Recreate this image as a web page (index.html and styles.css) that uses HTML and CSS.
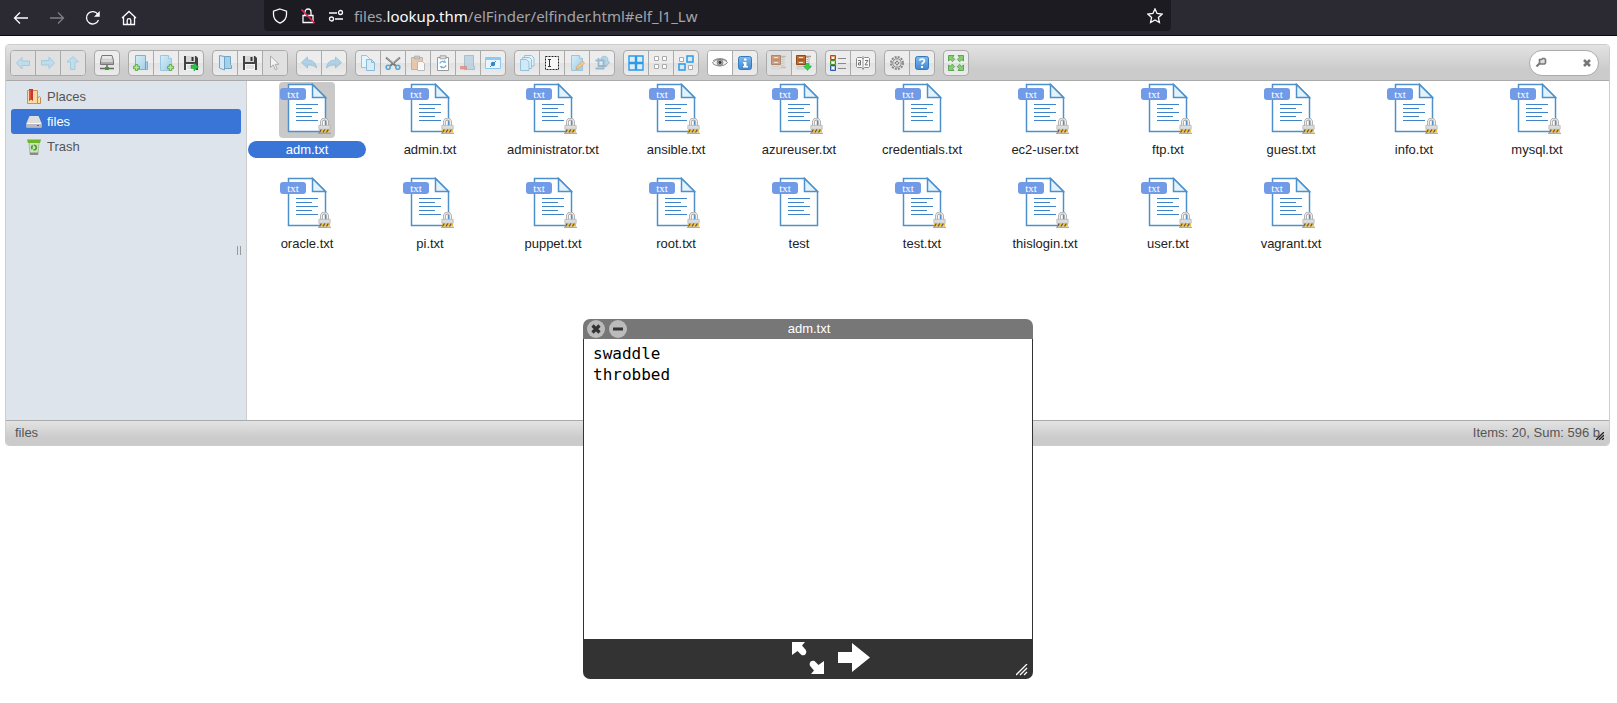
FILE: index.html
```html
<!DOCTYPE html>
<html lang="en">
<head>
<meta charset="utf-8">
<title>elFinder</title>
<link rel="stylesheet" href="styles.css">
</head>
<body>
<svg class="defs" aria-hidden="true">
  <defs>
    <linearGradient id="blue" x1="0" y1="0" x2="1" y2="1"><stop offset="0" stop-color="#d6eef9"/><stop offset="1" stop-color="#9fcbe6"/></linearGradient>
    <linearGradient id="metal" x1="0" y1="0" x2="0" y2="1"><stop offset="0" stop-color="#f4f4f4"/><stop offset="1" stop-color="#999"/></linearGradient>
    <linearGradient id="sky" x1="0" y1="0" x2="0" y2="1"><stop offset="0" stop-color="#7fbdf0"/><stop offset="1" stop-color="#3f87d3"/></linearGradient>
    <symbol id="plus" viewBox="0 0 6 6"><path d="M2 .4h2V2h1.600v2H4v1.600H2V4H.4V2H2z" fill="#b4e39a" stroke="#5aa846" stroke-width=".8"/></symbol>
    <symbol id="arrow" viewBox="0 0 16 16"><path d="M1.500 8L7 2.500V6h7.500v4.500H7V14z" fill="#a9daf2" stroke="#7cbce0"/></symbol>
    <symbol id="floppy" viewBox="0 0 16 16"><path d="M1 1h12l2 2v12H1z" fill="#444"/><path d="M3 1h9v6H3z" fill="#d8d8d8"/><path d="M8.500 2h2v4h-2z" fill="#333"/><path d="M3 9h10v6H3z" fill="#f6f6f6"/><path d="M4 11h8M4 13h8" stroke="#ccc"/></symbol>
    <symbol id="undo" viewBox="0 0 16 16"><path d="M.5 7.500L6.500 2v3c5 0 8.500 2.500 9 8-2-2.500-5-3-9-3v3z" fill="#9cc8e4" stroke="#7eb0d2" stroke-width=".8"/></symbol>
    <symbol id="page" viewBox="0 0 16 16"><path d="M2.500.5h8l3 3v12h-11z" fill="url(#blue)" stroke="#9cc6df"/><path d="M10.500.5v3h3" fill="#eef9ff" stroke="#9cc6df"/></symbol>
    <symbol id="cabinet" viewBox="0 0 16 16">
      <path d="M1 9h8v5H1z" fill="#ddd" stroke="#bbb" stroke-width=".6"/><path d="M2 11.500h6" stroke="#bbb"/>
      <path d="M.5.5h9v9h-9z" fill="#c3713a" stroke="#8e4a1c"/><path d="M1.500 5h7" stroke="#8e4a1c"/><path d="M3 2.500h4M3 7.500h4" stroke="#fbe6d2"/>
      <path d="M10 1.500h5M10 12.500h5" stroke="#b5a08c" stroke-width="1.500"/><path d="M11.500 2v11" stroke="#aaa" stroke-width="2" stroke-dasharray="1 1"/><path d="M13 3v9" stroke="#ccc" stroke-width="1.500"/>
    </symbol>
    <symbol id="corner" viewBox="0 0 16 16"><path d="M.5.5H6L4.700 2.200 6.800 4.300 4.500 6.600 2.300 4.500.5 6z" fill="#86cd76" stroke="#459a3c" stroke-width=".8"/></symbol>
    <symbol id="doc" viewBox="0 0 56 56">
      <path d="M9.500 2.500h24l13 13v34h-37z" fill="#fff" stroke="#4d90cc" stroke-width="1.500"/>
      <path d="M33.500 2.500v13h13z" fill="#e3f3fd" stroke="#4d90cc" stroke-width="1.500"/>
      <path d="M17 22.500h22M17 26.500h16M17 30.500h22M17 34.500h16M17 38.500h22" stroke="#3f83c8"/>
    </symbol>
    <symbol id="lock" viewBox="0 0 13 16">
      <path d="M3.500 9V4a3 3 0 0 1 6 0V9" fill="none" stroke="#a4a4a4" stroke-width="2.800"/>
      <path d="M3.500 9V4a3 3 0 0 1 6 0V9" fill="none" stroke="#eee" stroke-width="1.200"/>
      <path d="M.8 7.300h11.400v4H.8z" fill="#dcdcdc" stroke="#aaa" stroke-width=".6"/>
      <path d="M1 11.300h11v3.200H1z" fill="#fbc02a"/>
      <path d="M1.500 14.500l1.800-3M5 14.500l1.800-3M8.500 14.500l1.800-3" stroke="#555" stroke-width="1.200"/>
      <path d="M0 15.300h13" stroke="#999"/>
    </symbol>
  </defs>
</svg>

<header class="browser">
  <nav class="browser-nav" aria-label="Browser">
    <button class="chrome-btn" aria-label="Back"><svg viewBox="0 0 16 16"><path d="M15 8H1.500M7 2.500L1.500 8 7 13.500"/></svg></button>
    <button class="chrome-btn dim" aria-label="Forward"><svg viewBox="0 0 16 16"><path d="M1 8h13.500M9 2.500L14.500 8 9 13.500"/></svg></button>
    <button class="chrome-btn" aria-label="Reload"><svg viewBox="0 0 16 16"><path d="M13.500 10A6.200 6.200 0 1 1 13 4.500"/><path d="M14.500 1.500v5h-5z" fill="#fbfbfe" stroke-width=".5"/></svg></button>
    <button class="chrome-btn" aria-label="Home"><svg viewBox="0 0 16 16"><path d="M1 8l7-6.500L15 8M2.500 7v7.500h11V7M6.200 14.500V10.500a1.800 1.800 0 0 1 3.600 0v4"/></svg></button>
  </nav>
  <div class="urlbar">
    <svg class="uicon" viewBox="0 0 16 16"><path d="M8 1l6.500 2.200v3.300c0 4-2.500 7-6.500 8.700-4-1.700-6.500-4.700-6.500-8.700V3.200z"/></svg>
    <svg class="uicon" viewBox="0 0 16 16"><path d="M3 7.500h10v7H3zM5 7V4a3 3 0 0 1 6 0v3"/><path d="M1.500 1.500l13 13.500" stroke="#e22850" stroke-width="1.800"/></svg>
    <svg class="uicon" viewBox="0 0 16 16"><path d="M1 5h8M7 11h8"/><circle cx="12.500" cy="4.500" r="2"/><circle cx="3.500" cy="11" r="2"/></svg>
    <div class="url">files.<b>lookup.thm</b>/elFinder/elfinder.html#elf_l1_Lw</div>
    <svg class="uicon star" viewBox="0 0 16 16"><path d="M8 .9l2.100 4.600 5 .6-3.700 3.400 1 5L8 12l-4.400 2.500 1-5L.9 6.100l5-.6z"/></svg>
  </div>
</header>

<main class="finder">
  <div class="toolbar">
    <div class="group">
      <button class="off" aria-label="Back"><svg viewBox="0 0 16 16"><use href="#arrow"/></svg></button>
      <button class="off" aria-label="Forward"><svg viewBox="0 0 16 16"><use href="#arrow" transform="rotate(180 8 8)"/></svg></button>
      <button class="off" aria-label="Up"><svg viewBox="0 0 16 16"><use href="#arrow" transform="rotate(90 8 8)"/></svg></button>
    </div>
    <div class="group">
      <button aria-label="Mount network volume"><svg viewBox="0 0 16 16"><path d="M3 .5h10l1.500 5v4h-13v-4z" fill="url(#metal)" stroke="#777"/><path d="M3.500 3h9M2.500 6h11" stroke="#eee"/><path d="M8 10v3M1 13.500h14" stroke="#666" stroke-width="1.500"/><path d="M6 12h4v3H6z" fill="#33a02c"/></svg></button>
    </div>
    <div class="group">
      <button aria-label="New folder"><svg viewBox="0 0 16 16"><path d="M2.500.5h10v7l2-1v8h-12z" fill="url(#blue)" stroke="#82b0cc"/><path d="M12.500 7v7" stroke="#6a9fc0"/><use href="#plus" x="0" y="9" width="7" height="7"/></svg></button>
      <button aria-label="New file"><svg viewBox="0 0 16 16"><use href="#page"/><use href="#plus" x="9" y="9" width="7" height="7"/></svg></button>
      <button aria-label="Upload files"><svg viewBox="0 0 16 16"><use href="#floppy"/><path d="M8 10h3V8l4.500 3.800L11 16v-2.500H8z" fill="#2fc048" stroke="#179130" stroke-width=".5"/></svg></button>
    </div>
    <div class="group">
      <button aria-label="Open"><svg viewBox="0 0 16 16"><path d="M6 1.500h7.500v8l1 1v3H5z" fill="#a9cfe6" stroke="#6fa6c8"/><path d="M2.500.5l5 1v13.500l-5-2z" fill="#d3eafa" stroke="#6fa6c8"/></svg></button>
      <button aria-label="Download"><svg viewBox="0 0 16 16"><use href="#floppy"/></svg></button>
      <button class="off" aria-label="Select file"><svg viewBox="0 0 16 16"><path d="M3.500 1v11.500l2.800-2.700 2 5 1.900-.8-2-4.700h3.800z" fill="#fff" stroke="#888"/></svg></button>
    </div>
    <div class="group">
      <button class="half" aria-label="Undo"><svg viewBox="0 0 16 16"><use href="#undo"/></svg></button>
      <button class="half" aria-label="Redo"><svg viewBox="0 0 16 16"><use href="#undo" transform="matrix(-1 0 0 1 16 0)"/></svg></button>
    </div>
    <div class="group">
      <button aria-label="Copy"><svg viewBox="0 0 16 16"><path d="M1.500.5h5l3 3v9h-8z" fill="#e5f5fc" stroke="#9bc4dc"/><path d="M6.500 4.500h5l3 3v8h-8z" fill="#d5edf9" stroke="#8dbbd6"/><path d="M11.500 4.500v3h3" fill="none" stroke="#8dbbd6"/></svg></button>
      <button aria-label="Cut"><svg viewBox="0 0 16 16"><path d="M1 2.500L11 11M15 2.500L5 11" stroke="#777" stroke-width="2"/><path d="M1.500 2.500l7 6M14.500 2.500L8 8" stroke="#ccc" stroke-width=".7"/><circle cx="3.200" cy="12.200" r="2" fill="none" stroke="#5aa7d4" stroke-width="1.600"/><circle cx="12.800" cy="12.200" r="2" fill="none" stroke="#5aa7d4" stroke-width="1.600"/></svg></button>
      <button class="half" aria-label="Paste"><svg viewBox="0 0 16 16"><path d="M1.500 2.500h11v12h-11z" fill="#e6bd98" stroke="#c99a72"/><path d="M4.500 1h5v3h-5z" fill="#bbb" stroke="#888" stroke-width=".6"/><path d="M7.500 6.500h5l2 2v7h-7z" fill="#fff" stroke="#aaa"/></svg></button>
      <button aria-label="Empty the folder"><svg viewBox="0 0 16 16"><path d="M2.500 2.500h11v13h-11z" fill="#fff" stroke="#999"/><path d="M5 .8h6v3H5z" fill="#ddd" stroke="#888" stroke-width=".7"/><path d="M5 8.500C5 6.500 8 6 9 7M11 10c0 2.500-3 3-4 2" fill="none" stroke="#6fb3e4" stroke-width="1.300"/><path d="M9 4.800l2.500 3H8.500zM7 14l-2.500-3h3z" fill="#6fb3e4"/></svg></button>
      <button class="half" aria-label="Delete"><svg viewBox="0 0 16 16"><path d="M4.500.5h9v11h1v3h-10z" fill="#b3cddf" stroke="#8fb0c8"/><path d="M.5 11.500h6v2.500h-6z" fill="#ec8478" stroke="#c8574c" stroke-width=".6"/></svg></button>
      <button aria-label="Hide"><svg viewBox="0 0 16 16"><path d="M.5 2.500h15v11H.5z" fill="#e9f6ff" stroke="#8ac8f2"/><path d="M1 3h14v2H1z" fill="#8accf5"/><path d="M5 12l6-6" stroke="#4a86b8"/><circle cx="8" cy="9" r="2.200" fill="#3c86c2"/></svg></button>
    </div>
    <div class="group">
      <button aria-label="Duplicate"><svg viewBox="0 0 16 16"><path d="M5.500.5h7l2.500 2.500v8H5.500z" fill="#e1f3fb" stroke="#96c1d9"/><path d="M3.500 2.500h7l2 2v9h-9z" fill="#d9effa" stroke="#96c1d9"/><path d="M1.500 4.500h6l2.500 2.500v8.500H1.500z" fill="#cfe9f7" stroke="#96c1d9"/></svg></button>
      <button aria-label="Rename"><svg viewBox="0 0 16 16"><path d="M1.500 1.500h13v13h-13z" fill="#f6f6f6" stroke="#222" stroke-dasharray="2 1"/><path d="M4 4.500h3M5.500 4.500v7M4 11.500h3" stroke="#333"/></svg></button>
      <button aria-label="Edit file"><svg viewBox="0 0 16 16"><use href="#page"/><path d="M7 14.500l1-3 5.500-5.500 2 2L10 13.500z" fill="#f6ca85" stroke="#c39a5a" stroke-width=".6"/></svg></button>
      <button class="half" aria-label="Resize and rotate"><svg viewBox="0 0 16 16"><path d="M1.500 5.500h8v8h-8M4.500 3v8h8" fill="none" stroke="#7da9c6" stroke-width="1.800"/><path d="M7 3c2-3 7-2 7 2v2h2l-3.500 4L9 7h2c0-3-2-3-4-2z" fill="#a5cde6" stroke="#6d9dbd" stroke-width=".6"/></svg></button>
    </div>
    <div class="group">
      <button aria-label="Select all"><svg viewBox="0 0 16 16"><path d="M1 1h6.500v6.500H1zM8.500 1H15v6.500H8.500zM1 8.500h6.500V15H1zM8.500 8.500H15V15H8.500z" fill="#dcecf8" stroke="#2b9be6" stroke-width="1.400"/></svg></button>
      <button aria-label="Select none"><svg viewBox="0 0 16 16"><path d="M1.500 1.500h4v4h-4zM9.500 1.500h4v4h-4zM1.500 9.500h4v4h-4zM9.500 9.500h4v4h-4z" fill="#fff" stroke="#aaa"/></svg></button>
      <button aria-label="Invert selection"><svg viewBox="0 0 16 16"><path d="M1.500 2.500h4v4h-4zM10.500 10.500h4v4h-4z" fill="#fff" stroke="#aaa"/><path d="M9 1h6v6H9zM1 9h6v6H1z" fill="#d6eaf8" stroke="#2b9be6" stroke-width="1.500"/></svg></button>
    </div>
    <div class="group">
      <button class="on" aria-label="Preview"><svg viewBox="0 0 16 16"><path d="M.5 8C4 3 12 3 15.500 7.500 12 12 4 12 .5 8z" fill="#f4f4f4" stroke="#888"/><path d="M1 6C4 3 11 2.500 15 6" stroke="#777" stroke-width=".8"/><circle cx="8" cy="7.500" r="3" fill="#aaa" stroke="#666" stroke-width=".6"/><circle cx="8" cy="7.500" r="1.400" fill="#333"/></svg></button>
      <button aria-label="Get info"><svg viewBox="0 0 16 16"><rect x="1.500" y="1.500" width="13" height="13" rx="2" fill="url(#sky)" stroke="#3779bd"/><path d="M7 3.500h2.500v2H7zM6 7h3.500v4H11v1.500H6V11h1V8.500H6z" fill="#fff"/></svg></button>
    </div>
    <div class="group">
      <button class="off" aria-label="Extract files from archive"><svg viewBox="0 0 16 16"><use href="#cabinet"/></svg></button>
      <button aria-label="Create archive"><svg viewBox="0 0 16 16"><use href="#cabinet"/><path d="M10 8.500h3V11h2.500L11.500 15.500 7.500 11H10z" fill="#36d14b" stroke="#279a38" stroke-width=".5"/></svg></button>
    </div>
    <div class="group">
      <button aria-label="View"><svg viewBox="0 0 16 16"><path d="M.5.5h5v4h-5z" fill="#ef9a6d" stroke="#a84f25"/><path d="M.5 5.500h5v4h-5z" fill="#bde69a" stroke="#4d8b2f"/><path d="M.5 10.500h5v5h-5z" fill="#9dc1f3" stroke="#2a5a9f"/><path d="M2 2h2v2H2zM2 7h2v1.500H2zM2 12h2v2H2z" fill="#fff"/><path d="M8 3.500h8M8 8.500h8M8 13.500h8" stroke="#888"/></svg></button>
      <button aria-label="Sort"><svg viewBox="0 0 16 16"><path d="M2.500 2.500h4L8 4l1.500-1.500h4l1 1v8l-1 1h-4L8 14l-1.500-1.500h-4l-1-1v-8z" fill="#fafafa" stroke="#888"/><path d="M8 1v14" stroke="#999"/><path d="M3 5.500h2.500v4.500h-2V7.800h2M10 5.500h3L10 9.900h3" fill="none" stroke="#666" stroke-width=".9"/></svg></button>
    </div>
    <div class="group">
      <button aria-label="Preferences"><svg viewBox="0 0 16 16"><circle cx="8" cy="8" r="6" stroke="#888" stroke-width="2" stroke-dasharray="2 1.140"/><circle cx="8" cy="8" r="4.300" fill="#e2e2e2" stroke="#888"/><path d="M8 4v8M4 8h8" stroke="#aaa" stroke-width=".8"/><circle cx="8" cy="8" r="1.500" fill="#eee" stroke="#777"/></svg></button>
      <button aria-label="Help"><svg viewBox="0 0 16 16"><rect x="1.500" y="1.500" width="13" height="13" rx="2" fill="url(#sky)" stroke="#3779bd"/><path d="M5.500 5.500c.5-2 5-2 5 .5 0 1.500-2.500 1.500-2.500 3.500" fill="none" stroke="#fff" stroke-width="1.700"/><path d="M7 11h2v2H7z" fill="#fff"/></svg></button>
    </div>
    <div class="group">
      <button aria-label="Full screen"><svg viewBox="0 0 16 16"><use href="#corner"/><use href="#corner" transform="rotate(90 8 8)"/><use href="#corner" transform="rotate(180 8 8)"/><use href="#corner" transform="rotate(270 8 8)"/></svg></button>
    </div>
    <form class="search">
      <svg viewBox="0 0 12 12"><path d="M4.500 2.500h2l1-1h2l1 1v3.500l-1 1h-4l-1-1z" fill="#ddd" stroke="#777" stroke-width="1.600"/><path d="M4.500 6.500L1.500 9.500" stroke="#777" stroke-width="2.200"/></svg>
      <input type="text" aria-label="Search">
      <button type="button" aria-label="Clear"><svg viewBox="0 0 12 12"><path d="M3 3l6 6M9 3l-6 6" stroke="#777" stroke-width="2.600"/></svg></button>
    </form>
  </div>

  <div class="workzone">
    <nav class="tree" aria-label="Folders">
      <a href="#places"><svg viewBox="0 0 16 16"><path d="M1.500 1.500h10v13h-10z" fill="#f8dca4" stroke="#c99658"/><path d="M11.500 9l2-1.500 1 1v6h-3z" fill="#f9e1b0" stroke="#c18a48"/><path d="M3 0h4v12l-2-1.500L3 12z" fill="#cf3030"/><path d="M4 1v9" stroke="#ec7070"/></svg>Places</a>
      <a href="#files" class="current"><svg viewBox="0 0 16 16"><path d="M3.500 2h9l3 7v4.500H.5V9z" fill="#dedede"/><path d="M.5 9h15v4.500H.5z" fill="#b9b9c0"/><path d="M1 9.500h14" stroke="#f8f8f8"/><path d="M11 11.500h2" stroke="#666"/></svg>files</a>
      <a href="#trash"><svg viewBox="0 0 16 16"><path d="M3 3h10l-1 12.500H4z" fill="#c9e3bf" stroke="#9ab290" stroke-width=".8"/><path d="M1 .5h14l-1 3.500H2z" fill="#6db52b"/><circle cx="8" cy="8.500" r="2.300" stroke="#4d9c22" stroke-width="1.600" stroke-dasharray="3.800 1"/><path d="M4 13.500h8V16H4z" fill="#8b8b8b"/></svg>Trash</a>
      <span class="handle"></span>
    </nav>
    <ul class="files">
      <li class="tile selected"><div class="pic"><svg><use href="#doc"/></svg><span class="badge">txt</span><svg class="lock"><use href="#lock"/></svg></div><span class="name">adm.txt</span></li>
      <li class="tile"><div class="pic"><svg><use href="#doc"/></svg><span class="badge">txt</span><svg class="lock"><use href="#lock"/></svg></div><span class="name">admin.txt</span></li>
      <li class="tile"><div class="pic"><svg><use href="#doc"/></svg><span class="badge">txt</span><svg class="lock"><use href="#lock"/></svg></div><span class="name">administrator.txt</span></li>
      <li class="tile"><div class="pic"><svg><use href="#doc"/></svg><span class="badge">txt</span><svg class="lock"><use href="#lock"/></svg></div><span class="name">ansible.txt</span></li>
      <li class="tile"><div class="pic"><svg><use href="#doc"/></svg><span class="badge">txt</span><svg class="lock"><use href="#lock"/></svg></div><span class="name">azureuser.txt</span></li>
      <li class="tile"><div class="pic"><svg><use href="#doc"/></svg><span class="badge">txt</span></div><span class="name">credentials.txt</span></li>
      <li class="tile"><div class="pic"><svg><use href="#doc"/></svg><span class="badge">txt</span><svg class="lock"><use href="#lock"/></svg></div><span class="name">ec2-user.txt</span></li>
      <li class="tile"><div class="pic"><svg><use href="#doc"/></svg><span class="badge">txt</span><svg class="lock"><use href="#lock"/></svg></div><span class="name">ftp.txt</span></li>
      <li class="tile"><div class="pic"><svg><use href="#doc"/></svg><span class="badge">txt</span><svg class="lock"><use href="#lock"/></svg></div><span class="name">guest.txt</span></li>
      <li class="tile"><div class="pic"><svg><use href="#doc"/></svg><span class="badge">txt</span><svg class="lock"><use href="#lock"/></svg></div><span class="name">info.txt</span></li>
      <li class="tile"><div class="pic"><svg><use href="#doc"/></svg><span class="badge">txt</span><svg class="lock"><use href="#lock"/></svg></div><span class="name">mysql.txt</span></li>
      <li class="tile"><div class="pic"><svg><use href="#doc"/></svg><span class="badge">txt</span><svg class="lock"><use href="#lock"/></svg></div><span class="name">oracle.txt</span></li>
      <li class="tile"><div class="pic"><svg><use href="#doc"/></svg><span class="badge">txt</span><svg class="lock"><use href="#lock"/></svg></div><span class="name">pi.txt</span></li>
      <li class="tile"><div class="pic"><svg><use href="#doc"/></svg><span class="badge">txt</span><svg class="lock"><use href="#lock"/></svg></div><span class="name">puppet.txt</span></li>
      <li class="tile"><div class="pic"><svg><use href="#doc"/></svg><span class="badge">txt</span><svg class="lock"><use href="#lock"/></svg></div><span class="name">root.txt</span></li>
      <li class="tile"><div class="pic"><svg><use href="#doc"/></svg><span class="badge">txt</span></div><span class="name">test</span></li>
      <li class="tile"><div class="pic"><svg><use href="#doc"/></svg><span class="badge">txt</span><svg class="lock"><use href="#lock"/></svg></div><span class="name">test.txt</span></li>
      <li class="tile"><div class="pic"><svg><use href="#doc"/></svg><span class="badge">txt</span><svg class="lock"><use href="#lock"/></svg></div><span class="name">thislogin.txt</span></li>
      <li class="tile"><div class="pic"><svg><use href="#doc"/></svg><span class="badge">txt</span><svg class="lock"><use href="#lock"/></svg></div><span class="name">user.txt</span></li>
      <li class="tile"><div class="pic"><svg><use href="#doc"/></svg><span class="badge">txt</span><svg class="lock"><use href="#lock"/></svg></div><span class="name">vagrant.txt</span></li>
    </ul>
  </div>

  <footer class="statusbar">
    <span>files</span>
    <span>Items: 20, Sum: 596 b</span>
    <svg class="grip" viewBox="0 0 8 8"><path d="M0 8l8-8M3 8l5-5M6 8l2-2" stroke="#222" stroke-width="1.300"/></svg>
  </footer>
</main>

<section class="quicklook" aria-label="Preview">
  <header class="ql-title">
    <button aria-label="Close"><svg viewBox="0 0 18 18"><path d="M5.500 5.500l7 7M12.500 5.500l-7 7" stroke="#333" stroke-width="3.200"/></svg></button>
    <button aria-label="Minimize"><svg viewBox="0 0 18 18"><path d="M4 9h10" stroke="#333" stroke-width="3"/></svg></button>
    <span>adm.txt</span>
  </header>
  <pre class="ql-text">swaddle
throbbed</pre>
  <footer class="ql-bar">
    <button aria-label="Full screen"><svg viewBox="0 0 32 32"><path id="ex" d="M0 0h13L10 3.500l3 3.500c3 3 .5 7.500-3.500 6L5.500 9 0 13z" fill="#fff"/><use href="#ex" transform="rotate(180 16 16)"/></svg></button>
    <button aria-label="Next"><svg viewBox="0 0 32 32"><path d="M0 10h14V1l18 14.500L14 30v-9H0z" fill="#fff"/></svg></button>
    <svg class="ql-grip" viewBox="0 0 12 12"><path d="M0 11L11 0M4 11l7-7M8 11l3-3" stroke="#fff" stroke-width="1.300"/></svg>
  </footer>
</section>
</body>
</html>
```

FILE: styles.css
```css
* { box-sizing: border-box; }
body { margin: 0; background: #fff; font: 13px/17px "Liberation Sans", Arial, sans-serif; color: #222; }
button { border: 0; padding: 0; background: none; font: inherit; }
svg { display: block; fill: none; }
.defs { position: absolute; width: 0; height: 0; }

.browser { display: flex; height: 36px; background: #2b2a33; border-bottom: 1px solid #0c0c0d; }
.browser-nav { display: flex; gap: 20px; padding: 0 13px; width: 264px; align-items: center; flex: none; }
.chrome-btn { width: 16px; height: 16px; }
.chrome-btn svg, .uicon { width: 16px; height: 16px; stroke: #fbfbfe; stroke-width: 1.3; fill: none; flex: none; }
.dim { opacity: .4; }
.urlbar { display: flex; align-items: center; gap: 12px; width: 907px; height: 31px; padding: 0 8px; background: #1c1b22; border-radius: 0 0 4px 4px; }
.url { flex: 1; margin-left: -2px; font: 15px/20px "Noto Sans", sans-serif; color: #a4a4a9; }
.url b { font-weight: 400; color: #fbfbfe; }

.finder { margin: 8px 7px 0 5px; border: 1px solid #ccc; border-radius: 4px; overflow: hidden; }
.toolbar { display: flex; gap: 8px; padding: 5px 10px 4px 4px; height: 36px; background: linear-gradient(#e3e3e3, #cbcbcb 70%, #cbcbcb); border-bottom: 1px solid #aaa; }
.group { display: flex; height: 26px; border: 1px solid #aaa; border-radius: 4px; overflow: hidden; background: linear-gradient(#ededed 50%, #e2e2e2 50%, #ebebeb); flex: none; }
.group button { display: grid; place-items: center; width: 24px; height: 24px; }
.group button + button { width: 25px; border-left: 1px solid #aaa; }
.group svg { width: 16px; height: 16px; }
.group .off { background: #e0e0e0; }
.off svg { opacity: .6; }
.half svg { opacity: .75; }
.group .on { background: #fff; }
.search { display: flex; align-items: center; width: 70px; height: 26px; margin-left: auto; padding: 0 5px; border: 1px solid #aaa; border-radius: 13px; background: #fff; }
.search svg { width: 12px; height: 12px; flex: none; }
.search input { flex: 1; min-width: 0; border: 0; padding: 0; background: none; outline: 0; }

.workzone { display: flex; min-height: 339px; background: #fff; }
.tree { position: relative; width: 241px; flex: none; padding: 3px 5px; background: #dde4eb; border-right: 1px solid #ccc; }
.tree a { display: flex; align-items: center; gap: 5px; height: 25px; padding-left: 15px; border-radius: 3px; color: #555; text-decoration: none; }
.tree svg { width: 16px; height: 16px; }
.tree .current { background: #3875d7; color: #fff; }
.handle { position: absolute; right: 5px; top: 50%; width: 4px; height: 9px; margin-top: -5px; border: solid #999; border-width: 0 1px; }
.files { display: flex; flex-wrap: wrap; align-content: flex-start; flex: 1; margin: 0; padding: 1px 0 0; list-style: none; }
.tile { display: flex; flex-direction: column; align-items: center; width: 123px; height: 94px; padding: 0 4px 0 1px; }
.pic { position: relative; width: 56px; height: 56px; border-radius: 4px; margin-bottom: 3px; }
.pic svg { width: 56px; height: 56px; }
.badge { position: absolute; left: 1px; top: 6px; width: 26px; height: 12px; border-radius: 3px; background: #719be6; color: #fff; font: 11px/13px "Liberation Serif", serif; text-align: center; }
.pic .lock { position: absolute; left: 39px; top: 36px; width: 13px; height: 16px; }
.name { width: 100%; text-align: center; border-radius: 9px; }
.selected .pic { background: #c9c9c9; }
.selected .name { background: #3875d7; color: #fff; }

.statusbar { position: relative; display: flex; justify-content: space-between; align-items: center; height: 25px; padding: 0 9px 1px; color: #555; background: linear-gradient(#e3e3e3, #cbcbcb 70%, #cbcbcb); border-top: 1px solid #aaa; }
.grip { position: absolute; right: 5px; bottom: 5px; width: 8px; height: 8px; }

.quicklook { position: absolute; left: 583px; top: 319px; display: flex; flex-direction: column; width: 450px; height: 360px; border-radius: 7px; overflow: hidden; background: #fff; }
.ql-title { display: flex; align-items: center; gap: 4px; height: 20px; padding: 0 4px; background: #777; color: #fff; flex: none; }
.ql-title button { width: 18px; height: 18px; border-radius: 50%; background: #bbb; }
.ql-title span { flex: 1; padding: 0 42px 2px 0; text-align: center; }
.ql-text { flex: 1; margin: 0; padding: 4px 9px; border: solid #333; border-width: 0 1px; font: 16px/21px "DejaVu Sans Mono", monospace; color: #000; }
.ql-bar { position: relative; display: flex; justify-content: center; gap: 14px; height: 40px; padding: 3px 0 0 46px; background: #333; flex: none; }
.ql-bar button, .ql-bar button svg { width: 32px; height: 32px; }
.ql-grip { position: absolute; right: 5px; bottom: 3px; width: 12px; height: 12px; }
```
